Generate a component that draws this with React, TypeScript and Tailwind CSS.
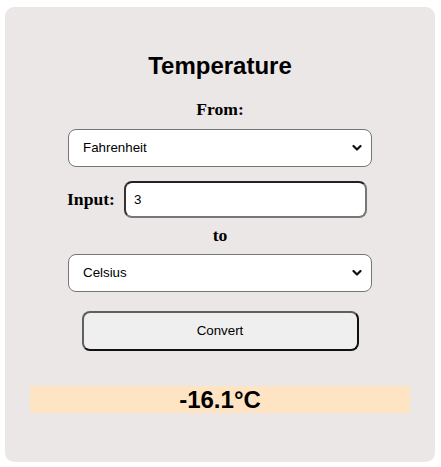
import React, { useState } from 'react';

function Chevron() {
  return (
    <svg
      className="pointer-events-none absolute right-[10px] top-1/2 -translate-y-1/2"
      width="10"
      height="7"
      viewBox="0 0 10 7"
      fill="none"
    >
      <path d="M1.5 1.5 L5 5 L8.5 1.5" stroke="#111" strokeWidth="2.2" strokeLinecap="round" strokeLinejoin="round" />
    </svg>
  );
}

function Select({ value, onChange, options, className }: { value: string; onChange: (v: string) => void; options: string[]; className?: string }) {
  return (
    <div className={`relative w-[304px] ${className ?? ''}`}>
      <select
        value={value}
        onChange={(e) => onChange(e.target.value)}
        className="h-[38px] w-full appearance-none rounded-lg border border-[#767676] bg-white pl-[14px] pr-[24px] text-[13.33px] text-black outline-none"
      >
        {options.map((o) => (
          <option key={o}>{o}</option>
        ))}
      </select>
      <Chevron />
    </div>
  );
}

export default function App() {
  const [from, setFrom] = useState('Fahrenheit');
  const [to, setTo] = useState('Celsius');
  const [value, setValue] = useState('3');

  return (
    <div className="min-h-[467px] w-[441px] bg-white pt-[7px] pl-[5px]">
      <div className="flex w-[430px] flex-col items-center rounded-[9px] bg-[#ebe7e6] pt-[45px] pb-[49px] font-['Liberation_Sans',Arial,sans-serif] text-black">
        <h1 className="text-[24px] font-bold leading-[28px]">Temperature</h1>

        <label className="mt-[19px] font-['Liberation_Serif','Times_New_Roman',serif] text-[17.6px] font-bold leading-[20px]">
          From:
        </label>
        <Select value={from} onChange={setFrom} options={['Fahrenheit', 'Celsius', 'Kelvin']} className="mt-[10px]" />

        <div className="mt-[14px] flex items-center gap-[9px] self-start pl-[62px]">
          <span className="font-['Liberation_Serif','Times_New_Roman',serif] text-[17.6px] font-bold">Input:</span>
          <input
            value={value}
            onChange={(e) => setValue(e.target.value)}
            className="h-[37px] w-[243px] rounded-lg border-2 border-t-[#222] border-l-[#333] border-r-[#777] border-b-[#777] bg-white px-[8px] text-[13.33px] text-black outline-none"
          />
        </div>

        <span className="mt-[7px] font-['Liberation_Serif','Times_New_Roman',serif] text-[17.6px] font-bold leading-[20px]">
          to
        </span>
        <Select value={to} onChange={setTo} options={['Celsius', 'Fahrenheit', 'Kelvin']} className="mt-[9px]" />

        <button className="mt-[19px] h-[40px] w-[277px] rounded-lg border-2 border-t-[#5f5f5f] border-l-[#5f5f5f] border-r-[#111] border-b-[#111] bg-[#efefef] text-[13.33px] text-black">
          Convert
        </button>

        <div className="mt-[35px] flex h-[27px] w-[380px] items-center justify-center bg-[#ffe4c4] text-[24px] font-bold">
          -16.1°C
        </div>
      </div>
    </div>
  );
}
